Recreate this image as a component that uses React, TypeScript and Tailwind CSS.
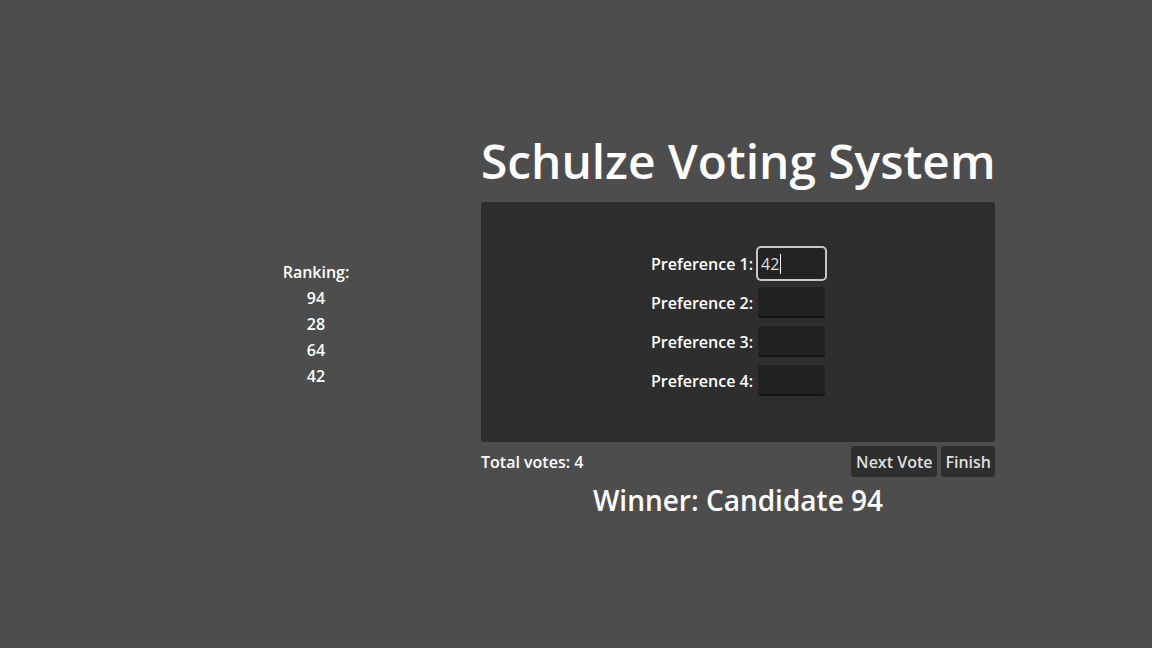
import React from "react";

const prefs = [
  { n: 1, value: "42", focused: true },
  { n: 2, value: "", focused: false },
  { n: 3, value: "", focused: false },
  { n: 4, value: "", focused: false },
];

const ranking = [94, 28, 64, 42];

function PrefInput({ value, focused }: { value: string; focused: boolean }) {
  if (focused) {
    return (
      <div className="h-[31px] w-[67px] rounded-[3px] bg-[#232323] ring-2 ring-[#c8c8c8] flex items-center px-[3px] text-[16px] font-normal text-[#dfdfdf]">
        <span>{value}</span>
        <span className="w-px h-[20px] bg-white ml-px" />
      </div>
    );
  }
  return (
    <div className="h-[31px] w-[67px] rounded-[3px] bg-[#222222] border-b-2 border-[#141414]" />
  );
}

export default function App() {
  return (
    <div
      className="w-[1152px] h-[648px] bg-[#4d4d4d] text-white flex items-start"
      style={{ fontFamily: '"Open Sans", "Noto Sans", sans-serif' }}
    >
      {/* ranking column */}
      <div className="ml-[283px] mt-[259px] w-[66px] flex flex-col items-center font-semibold text-[16px] leading-[26px]">
        <div>Ranking:</div>
        {ranking.map((r) => (
          <div key={r}>{r}</div>
        ))}
      </div>

      {/* main column */}
      <div className="ml-[132px] mt-[126px] w-[514px] flex flex-col font-semibold">
        <h1 className="h-[72px] text-[47.8px] leading-[70px] text-center whitespace-nowrap">
          Schulze Voting System
        </h1>

        <div className="mt-[4px] h-[240px] rounded-[3px] bg-[#2e2e2e] flex items-center justify-center">
          <div className="flex flex-col gap-[8px]">
            {prefs.map((p) => (
              <div key={p.n} className="flex items-center gap-[5px]">
                <span className="text-[16px] text-right whitespace-nowrap">Preference {p.n}:</span>
                <PrefInput value={p.value} focused={p.focused} />
              </div>
            ))}
          </div>
        </div>

        <div className="mt-[4px] flex items-center justify-between">
          <span className="text-[16px] whitespace-nowrap">Total votes: 4</span>
          <div className="flex gap-[4px]">
            <button className="h-[31px] px-[5px] rounded-[3px] bg-[#2e2e2e] text-[16px] text-[#dfdfdf] font-semibold whitespace-nowrap">
              Next Vote
            </button>
            <button className="h-[31px] px-[4px] rounded-[3px] bg-[#2e2e2e] text-[16px] text-[#dfdfdf] font-semibold whitespace-nowrap">
              Finish
            </button>
          </div>
        </div>

        <div className="mt-[4px] text-center text-[28px] leading-[38px] whitespace-nowrap">Winner: Candidate 94</div>
      </div>
    </div>
  );
}
